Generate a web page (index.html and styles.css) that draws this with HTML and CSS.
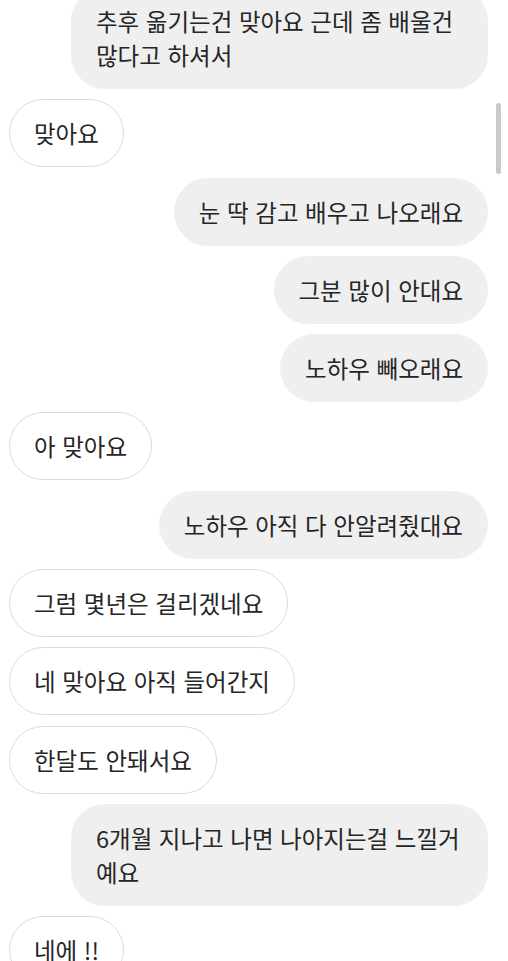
FILE: index.html
```html
<!DOCTYPE html>
<html lang="ko">
<head>
<meta charset="utf-8">
<link rel="stylesheet" href="styles.css">
</head>
<body>
<div class="chat">
  <div class="msg sent">추후 옮기는건 맞아요 근데 좀 배울건 많다고 하셔서</div>
  <div class="msg recv">맞아요</div>
  <div class="msg sent">눈 딱 감고 배우고 나오래요</div>
  <div class="msg sent">그분 많이 안대요</div>
  <div class="msg sent">노하우 빼오래요</div>
  <div class="msg recv">아 맞아요</div>
  <div class="msg sent">노하우 아직 다 안알려줬대요</div>
  <div class="msg recv">그럼 몇년은 걸리겠네요</div>
  <div class="msg recv">네 맞아요 아직 들어간지</div>
  <div class="msg recv">한달도 안돼서요</div>
  <div class="msg sent">6개월 지나고 나면 나아지는걸 느낄거예요</div>
  <div class="msg recv">네에 !!</div>
</div>
<div class="scrollbar"></div>
</body>
</html>
```
FILE: styles.css
```css
html, body {
  margin: 0;
  padding: 0;
  background: #ffffff;
  overflow: hidden;
}
body {
  width: 508px;
  height: 961px;
  position: relative;
  font-family: "Noto Sans CJK KR", "Noto Sans", sans-serif;
  color: #262626;
}
.chat {
  display: flex;
  flex-direction: column;
  gap: 10.3px;
  padding: 0 20px 0 9px;
  margin-top: -13px;
}
.msg {
  box-sizing: border-box;
  font-size: 23.5px;
  line-height: 34px;
  padding: 17px 25px;
  border-radius: 34px;
  max-width: 417px;
  word-break: normal;
}
.sent {
  align-self: flex-end;
  background: #efefef;
}
.recv {
  align-self: flex-start;
  background: #ffffff;
  border: 1px solid #dbdbdb;
  padding: 16px 24px;
}
.scrollbar {
  position: absolute;
  top: 103px;
  right: 7px;
  width: 5px;
  height: 71px;
  border-radius: 3px;
  background: #c9c9c9;
}
```
